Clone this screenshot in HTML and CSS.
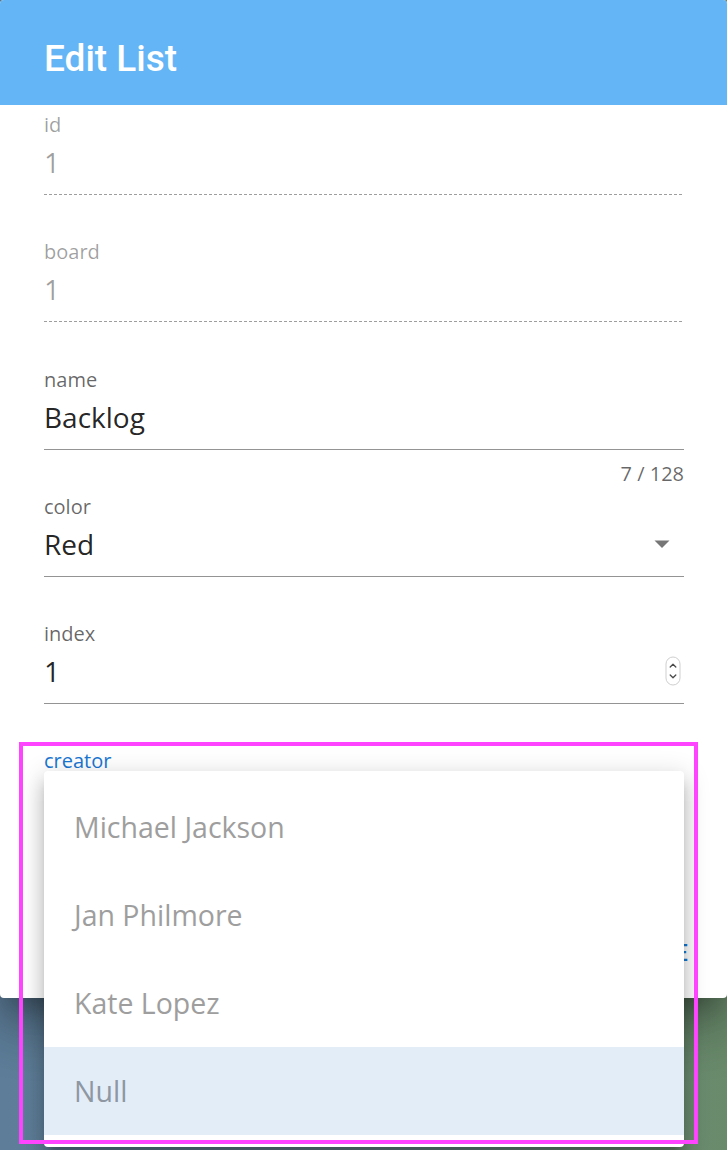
FILE: index.html
```html
<!DOCTYPE html>
<html lang="en">
<head>
<meta charset="utf-8">
<title>Edit List</title>
<link rel="stylesheet" href="styles.css">
</head>
<body>
<div class="page">
  <div class="dialog">
    <header class="dialog-header">
      <h1 class="dialog-title">Edit List</h1>
    </header>
    <div class="dialog-body">
      <div class="field field--disabled">
        <div class="field-label">id</div>
        <div class="field-control"><span class="field-value">1</span></div>
        <div class="field-helper"></div>
      </div>
      <div class="field field--disabled">
        <div class="field-label">board</div>
        <div class="field-control"><span class="field-value">1</span></div>
        <div class="field-helper"></div>
      </div>
      <div class="field">
        <div class="field-label">name</div>
        <div class="field-control"><span class="field-value">Backlog</span></div>
        <div class="field-helper"><span class="counter">7 / 128</span></div>
      </div>
      <div class="field">
        <div class="field-label">color</div>
        <div class="field-control">
          <span class="field-value">Red</span>
          <span class="select-arrow">
            <svg width="16" height="8" viewBox="0 0 16 8" aria-hidden="true"><path d="M0.5 0.5 H15.5 L8 8 Z" fill="#767676"/></svg>
          </span>
        </div>
        <div class="field-helper"></div>
      </div>
      <div class="field">
        <div class="field-label">index</div>
        <div class="field-control">
          <span class="field-value">1</span>
          <span class="spinner">
            <svg width="16" height="30" viewBox="0 0 16 30" aria-hidden="true">
              <rect x="1" y="1" width="14" height="28" rx="7" ry="7" fill="#fff" stroke="#cfcfcf" stroke-width="1"/>
              <path d="M5.2 11 L8 8.2 L10.8 11" fill="none" stroke="#4a4a4a" stroke-width="1.3" stroke-linecap="round" stroke-linejoin="round"/>
              <path d="M5.2 19 L8 21.8 L10.8 19" fill="none" stroke="#4a4a4a" stroke-width="1.3" stroke-linecap="round" stroke-linejoin="round"/>
            </svg>
          </span>
        </div>
        <div class="field-helper"></div>
      </div>
      <div class="field field--focused">
        <div class="field-label">creator</div>
        <div class="field-control"><span class="field-value"></span></div>
        <div class="field-helper"></div>
      </div>
      <div class="dialog-actions">
        <button class="btn" type="button">Cancel</button>
        <button class="btn" type="button">Save</button>
      </div>
    </div>
  </div>

  <ul class="menu" role="listbox">
    <li class="menu-item">Michael Jackson</li>
    <li class="menu-item">Jan Philmore</li>
    <li class="menu-item">Kate Lopez</li>
    <li class="menu-item menu-item--active">Null</li>
  </ul>

  <div class="highlight-box"></div>
</div>
</body>
</html>
```

FILE: styles.css
```css
* {
  box-sizing: border-box;
}

html, body {
  margin: 0;
  padding: 0;
}

body {
  width: 727px;
  height: 1150px;
  overflow: hidden;
  background: linear-gradient(90deg, #5d7d99 0%, #62808a 45%, #6a8b6b 100%);
}

.page {
  position: relative;
  width: 727px;
  height: 1150px;
}

.dialog {
  width: 727px;
  height: 998px;
  background: #fff;
  border-radius: 4px;
  overflow: hidden;
  box-shadow: 0 19px 26px -12px rgba(0, 0, 0, .3), 0 30px 50px 5px rgba(0, 0, 0, .18), 0 12px 60px 10px rgba(0, 0, 0, .12);
}

.dialog-header {
  height: 105px;
  padding: 37px 44px 0;
  background: #64b5f6;
}

.dialog-title {
  margin: 0;
  font-family: Roboto, "Liberation Sans", sans-serif;
  font-weight: 500;
  font-size: 37px;
  line-height: 44px;
  color: #fff;
}

.dialog-body {
  padding: 8px 43px 0 44px;
  font-family: "Open Sans", "Noto Sans", sans-serif;
}

.field-label {
  font-size: 20px;
  line-height: 24px;
  height: 24px;
  color: rgba(0, 0, 0, .6);
}

.field-control {
  display: flex;
  align-items: center;
  height: 58px;
  padding: 5px 0 12px;
  border-bottom: 1px solid rgba(0, 0, 0, .42);
}

.field-value {
  flex: 1;
  font-size: 28px;
  line-height: 40px;
  height: 40px;
  color: rgba(0, 0, 0, .87);
}

.field-helper {
  height: 45.25px;
  padding-top: 12px;
  text-align: right;
  font-size: 20px;
  line-height: 24px;
}

.counter {
  color: rgba(0, 0, 0, .6);
}

.field--disabled .field-label,
.field--disabled .field-value {
  color: rgba(0, 0, 0, .38);
}

.field--disabled .field-control {
  border-bottom: none;
  padding-bottom: 13px;
  background-image: repeating-linear-gradient(90deg, rgba(0, 0, 0, .38) 0, rgba(0, 0, 0, .38) 3px, transparent 3px, transparent 5px);
  background-size: 100% 1px;
  background-position: left bottom;
  background-repeat: no-repeat;
}

.field--focused .field-label {
  color: #1976d2;
}

.select-arrow {
  display: flex;
  justify-content: center;
  align-items: center;
  width: 44px;
  height: 40px;
  padding-top: 1px;
}

.spinner {
  display: flex;
  align-items: center;
  height: 40px;
  margin-right: 3px;
}

.dialog-actions {
  display: flex;
  justify-content: flex-end;
  gap: 16px;
  margin: 61px -6px 0 0;
}

.btn {
  border: none;
  background: none;
  padding: 0;
  font-family: Roboto, "Liberation Sans", sans-serif;
  font-weight: 500;
  font-size: 24.5px;
  line-height: 30px;
  letter-spacing: .0892em;
  text-transform: uppercase;
  color: #1976d2;
}

.menu {
  position: absolute;
  left: 44px;
  top: 771px;
  width: 640px;
  height: 376px;
  margin: 0;
  padding: 12px 0;
  list-style: none;
  background: #fff;
  border-radius: 4px;
  box-shadow: 0 9px 9px -5px rgba(0, 0, 0, .2), 0 14px 18px 2px rgba(0, 0, 0, .14), 0 5px 24px 4px rgba(0, 0, 0, .12);
  font-family: "Open Sans", "Noto Sans", sans-serif;
}

.menu-item {
  height: 88px;
  padding-left: 30px;
  font-size: 28.5px;
  line-height: 88px;
  color: #9e9e9e;
}

.menu-item--active {
  background: #e3edf8;
  color: #8e97a2;
}

.highlight-box {
  position: absolute;
  left: 19px;
  top: 742px;
  width: 679px;
  height: 402px;
  border: 4px solid #ff44ff;
  pointer-events: none;
}
```
